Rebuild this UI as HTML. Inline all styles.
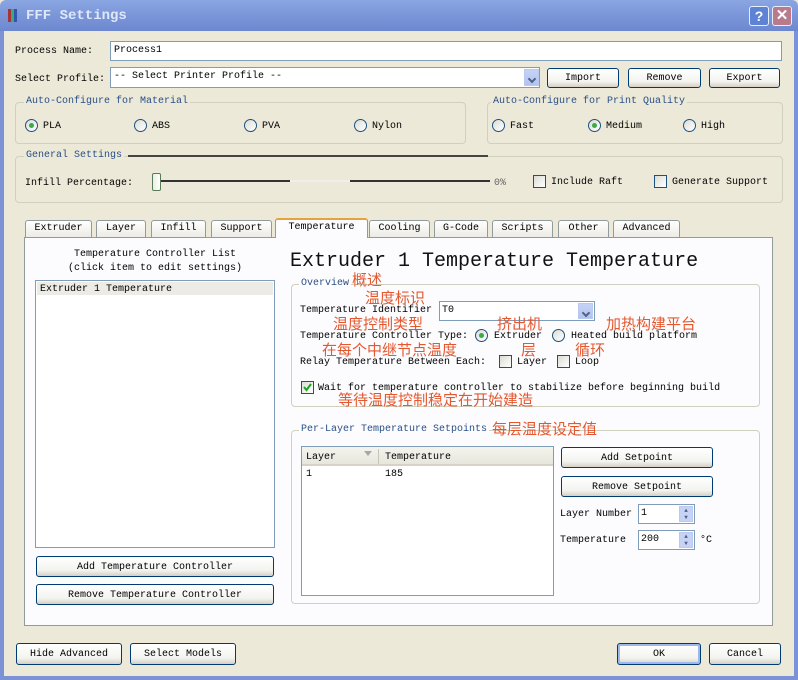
<!DOCTYPE html>
<html><head><meta charset="utf-8">
<style>
*{box-sizing:border-box;margin:0;padding:0}
body{width:798px;height:680px;overflow:hidden;background:#ece9d8;font-family:"Liberation Mono",monospace;font-size:10px;color:#000;position:relative}
.a{position:absolute;white-space:nowrap}
.t{line-height:12px;padding-top:1px}
.inp{background:#fff;border:1px solid #7f9db9}
.btn{border:1px solid #003c74;border-radius:3px;background:linear-gradient(#fff,#f3f3ef 70%,#d6d0c5);text-align:center;font-size:10px}
.grp{border:1px solid #d0d0bf;border-radius:4px}
.gl{background:#ece9d8;color:#2a4f86;padding:0 2px;line-height:12px}
.rad{width:13px;height:13px;border:1px solid #1c5180;border-radius:50%;background:linear-gradient(135deg,#dcdcd5,#fff)}
.rad.on::after{content:"";position:absolute;left:3px;top:3px;width:5px;height:5px;border-radius:50%;background:#3fa944}
.chk{width:13px;height:13px;border:1px solid #1c5180;background:linear-gradient(135deg,#dcdcd5,#fff)}
.tab{border:1px solid #919b9c;border-bottom:none;border-radius:3px 3px 0 0;background:linear-gradient(#fff,#ecebe5);text-align:center;line-height:15px;height:17px;top:220px}
.cn{font-family:"Liberation Sans","Noto Sans CJK SC",sans-serif;font-size:15px;color:#e4582f;line-height:17px}
.dd{background:linear-gradient(#c6d3f7,#b1c3f0);border:1px solid #b9c9ef;width:15px}
.dd::after{content:"";position:absolute;left:4px;top:6px;width:4px;height:4px;border-right:2px solid #4d6185;border-bottom:2px solid #4d6185;transform:rotate(45deg)}
</style></head><body>
<div class="a" style="left:0;top:0;width:798px;height:31px;background:linear-gradient(#8aa6e2,#7893d6 60%,#6d88cf);border-radius:6px 6px 0 0"></div>
<div class="a" style="left:0;top:31px;width:4px;height:649px;background:#7b93d6"></div>
<div class="a" style="left:794px;top:31px;width:4px;height:649px;background:#7b93d6"></div>
<div class="a" style="left:0;top:676px;width:798px;height:4px;background:#7b93d6"></div>
<div class="a" style="left:8px;top:9px;width:3px;height:13px;background:#a33"></div>
<div class="a" style="left:11px;top:9px;width:3px;height:13px;background:#3a8"></div>
<div class="a" style="left:14px;top:9px;width:3px;height:13px;background:#35a"></div>
<div class="a" style="left:26px;top:8px;color:#dfe7fa;font-weight:bold;font-size:14px;line-height:16px">FFF Settings</div>
<div class="a" style="left:749px;top:6px;width:20px;height:20px;border:1px solid #e8eefc;border-radius:3px;background:#5d82d6;color:#fff;font:bold 14px 'Liberation Sans',sans-serif;text-align:center;line-height:18px">?</div>
<div class="a" style="left:772px;top:6px;width:20px;height:20px;border:1px solid #e8eefc;border-radius:3px;background:#b97a8c;color:#fff;font:bold 15px 'Liberation Sans',sans-serif;text-align:center;line-height:18px">✕</div>

<div class="a t" style="left:15px;top:45px">Process Name:</div>
<div class="a inp t" style="left:110px;top:41px;width:672px;height:20px;padding:3px 3px">Process1</div>
<div class="a t" style="left:15px;top:73px">Select Profile:</div>
<div class="a inp t" style="left:110px;top:67px;width:430px;height:21px;padding:3px 3px">-- Select Printer Profile --</div>
<div class="a dd" style="left:524px;top:69px;height:17px"></div>
<div class="a btn t" style="left:547px;top:68px;width:72px;height:20px;line-height:18px">Import</div>
<div class="a btn t" style="left:628px;top:68px;width:73px;height:20px;line-height:18px">Remove</div>
<div class="a btn t" style="left:709px;top:68px;width:71px;height:20px;line-height:18px">Export</div>

<div class="a grp" style="left:15px;top:102px;width:451px;height:42px"></div>
<div class="a gl" style="left:24px;top:96px">Auto-Configure for Material</div>
<div class="a rad on" style="left:25px;top:119px"></div><div class="a t" style="left:43px;top:120px">PLA</div>
<div class="a rad" style="left:134px;top:119px"></div><div class="a t" style="left:152px;top:120px">ABS</div>
<div class="a rad" style="left:244px;top:119px"></div><div class="a t" style="left:262px;top:120px">PVA</div>
<div class="a rad" style="left:354px;top:119px"></div><div class="a t" style="left:372px;top:120px">Nylon</div>

<div class="a grp" style="left:487px;top:102px;width:296px;height:42px"></div>
<div class="a gl" style="left:491px;top:96px">Auto-Configure for Print Quality</div>
<div class="a rad" style="left:492px;top:119px"></div><div class="a t" style="left:510px;top:120px">Fast</div>
<div class="a rad on" style="left:588px;top:119px"></div><div class="a t" style="left:606px;top:120px">Medium</div>
<div class="a rad" style="left:683px;top:119px"></div><div class="a t" style="left:701px;top:120px">High</div>

<div class="a grp" style="left:15px;top:156px;width:768px;height:47px"></div>
<div class="a gl" style="left:24px;top:150px">General Settings</div>
<div class="a" style="left:128px;top:155px;width:360px;height:2px;background:#444"></div>
<div class="a t" style="left:25px;top:177px">Infill Percentage:</div>
<div class="a" style="left:161px;top:180px;width:329px;height:2px;background:#333"></div>
<div class="a" style="left:290px;top:180px;width:60px;height:2px;background:#eee"></div>
<div class="a" style="left:152px;top:173px;width:9px;height:18px;border:1px solid #5a7a5a;border-radius:2px;background:linear-gradient(90deg,#e8f0e0,#fff)"></div>
<div class="a t" style="left:494px;top:177px;color:#666">0%</div>
<div class="a chk" style="left:533px;top:175px"></div><div class="a t" style="left:551px;top:176px">Include Raft</div>
<div class="a chk" style="left:654px;top:175px"></div><div class="a t" style="left:672px;top:176px">Generate Support</div>

<div class="a tab" style="left:25px;width:67px">Extruder</div>
<div class="a tab" style="left:96px;width:50px">Layer</div>
<div class="a tab" style="left:151px;width:55px">Infill</div>
<div class="a tab" style="left:211px;width:61px">Support</div>
<div class="a tab" style="left:369px;width:61px">Cooling</div>
<div class="a tab" style="left:434px;width:54px">G-Code</div>
<div class="a tab" style="left:492px;width:61px">Scripts</div>
<div class="a tab" style="left:558px;width:51px">Other</div>
<div class="a tab" style="left:613px;width:67px">Advanced</div>
<div class="a" style="left:24px;top:237px;width:749px;height:389px;border:1px solid #919b9c;background:#fcfcfe"></div>
<div class="a" style="left:275px;top:218px;width:93px;height:20px;border:1px solid #919b9c;border-bottom:none;border-top:2px solid #e6a23b;border-radius:3px 3px 0 0;background:#fcfcfe;text-align:center;line-height:16px">Temperature</div>

<div class="a t" style="left:35px;top:248px;width:240px;text-align:center">Temperature Controller List</div>
<div class="a t" style="left:35px;top:262px;width:240px;text-align:center">(click item to edit settings)</div>
<div class="a" style="left:35px;top:280px;width:240px;height:268px;border:1px solid #7f9db9;background:#fff"></div>
<div class="a t" style="left:37px;top:282px;width:236px;height:13px;background:#ecebe6;padding-left:3px;line-height:13px">Extruder 1 Temperature</div>
<div class="a btn t" style="left:36px;top:556px;width:238px;height:21px;line-height:19px">Add Temperature Controller</div>
<div class="a btn t" style="left:36px;top:584px;width:238px;height:21px;line-height:19px">Remove Temperature Controller</div>

<div class="a" style="left:290px;top:250px;font-size:20px;line-height:24px;color:#111">Extruder 1 Temperature Temperature</div>

<div class="a grp" style="left:291px;top:284px;width:469px;height:123px"></div>
<div class="a gl" style="left:299px;top:278px;background:#fcfcfe">Overview</div>
<div class="a t" style="left:300px;top:304px">Temperature Identifier</div>
<div class="a inp t" style="left:439px;top:301px;width:156px;height:20px;padding:3px 2px">T0</div>
<div class="a dd" style="left:578px;top:303px;height:16px"></div>
<div class="a t" style="left:300px;top:330px">Temperature Controller Type:</div>
<div class="a rad on" style="left:475px;top:329px"></div><div class="a t" style="left:494px;top:330px">Extruder</div>
<div class="a rad" style="left:552px;top:329px"></div><div class="a t" style="left:571px;top:330px">Heated build platform</div>
<div class="a t" style="left:300px;top:356px">Relay Temperature Between Each:</div>
<div class="a chk" style="left:499px;top:355px"></div><div class="a t" style="left:517px;top:356px">Layer</div>
<div class="a chk" style="left:557px;top:355px"></div><div class="a t" style="left:575px;top:356px">Loop</div>
<div class="a chk" style="left:301px;top:381px"></div>
<svg class="a" style="left:303px;top:383px" width="9" height="9"><path d="M1 4 L3.5 7 L8 1" fill="none" stroke="#21a121" stroke-width="2"/></svg>
<div class="a t" style="left:318px;top:382px">Wait for temperature controller to stabilize before beginning build</div>

<div class="a grp" style="left:291px;top:430px;width:469px;height:174px"></div>
<div class="a gl" style="left:299px;top:424px;background:#fcfcfe">Per-Layer Temperature Setpoints</div>
<div class="a" style="left:301px;top:446px;width:253px;height:150px;border:1px solid #7f9db9;background:#fff"></div>
<div class="a" style="left:302px;top:447px;width:251px;height:19px;background:linear-gradient(#f4f4ee,#e8e6dc);border-bottom:2px solid #d6d3c6"></div>
<div class="a" style="left:378px;top:449px;width:1px;height:15px;background:#c7c5b6"></div>
<div class="a t" style="left:306px;top:451px">Layer</div>
<div class="a" style="left:364px;top:451px;width:0;height:0;border-left:4px solid transparent;border-right:4px solid transparent;border-top:5px solid #a8a8a0"></div>
<div class="a t" style="left:385px;top:451px">Temperature</div>
<div class="a t" style="left:306px;top:468px">1</div>
<div class="a t" style="left:385px;top:468px">185</div>
<div class="a btn t" style="left:561px;top:447px;width:152px;height:21px;line-height:19px">Add Setpoint</div>
<div class="a btn t" style="left:561px;top:476px;width:152px;height:21px;line-height:19px">Remove Setpoint</div>
<div class="a t" style="left:560px;top:508px">Layer Number</div>
<div class="a inp t" style="left:638px;top:504px;width:57px;height:20px;padding:3px 2px">1</div>
<div class="a" style="left:679px;top:506px;width:14px;height:16px;background:#c6d3f7;border:1px solid #b9c9ef;font-size:6px;line-height:7px;text-align:center;color:#4d6185">▲<br>▼</div>
<div class="a t" style="left:560px;top:534px">Temperature</div>
<div class="a inp t" style="left:638px;top:530px;width:57px;height:20px;padding:3px 2px">200</div>
<div class="a" style="left:679px;top:532px;width:14px;height:16px;background:#c6d3f7;border:1px solid #b9c9ef;font-size:6px;line-height:7px;text-align:center;color:#4d6185">▲<br>▼</div>
<div class="a t" style="left:700px;top:534px">°C</div>

<div class="a cn" style="left:352px;top:272px">概述</div>
<div class="a cn" style="left:365px;top:290px">温度标识</div>
<div class="a cn" style="left:333px;top:316px">温度控制类型</div>
<div class="a cn" style="left:497px;top:316px">挤出机</div>
<div class="a cn" style="left:606px;top:316px">加热构建平台</div>
<div class="a cn" style="left:322px;top:342px">在每个中继节点温度</div>
<div class="a cn" style="left:521px;top:342px">层</div>
<div class="a cn" style="left:575px;top:342px">循环</div>
<div class="a cn" style="left:338px;top:392px">等待温度控制稳定在开始建造</div>
<div class="a cn" style="left:492px;top:421px">每层温度设定值</div>

<div class="a btn t" style="left:16px;top:643px;width:106px;height:22px;line-height:20px">Hide Advanced</div>
<div class="a btn t" style="left:130px;top:643px;width:106px;height:22px;line-height:20px">Select Models</div>
<div class="a btn t" style="left:617px;top:643px;width:84px;height:22px;line-height:20px;box-shadow:inset 0 0 0 2px #9db9eb">OK</div>
<div class="a btn t" style="left:709px;top:643px;width:72px;height:22px;line-height:20px">Cancel</div>
</body></html>
